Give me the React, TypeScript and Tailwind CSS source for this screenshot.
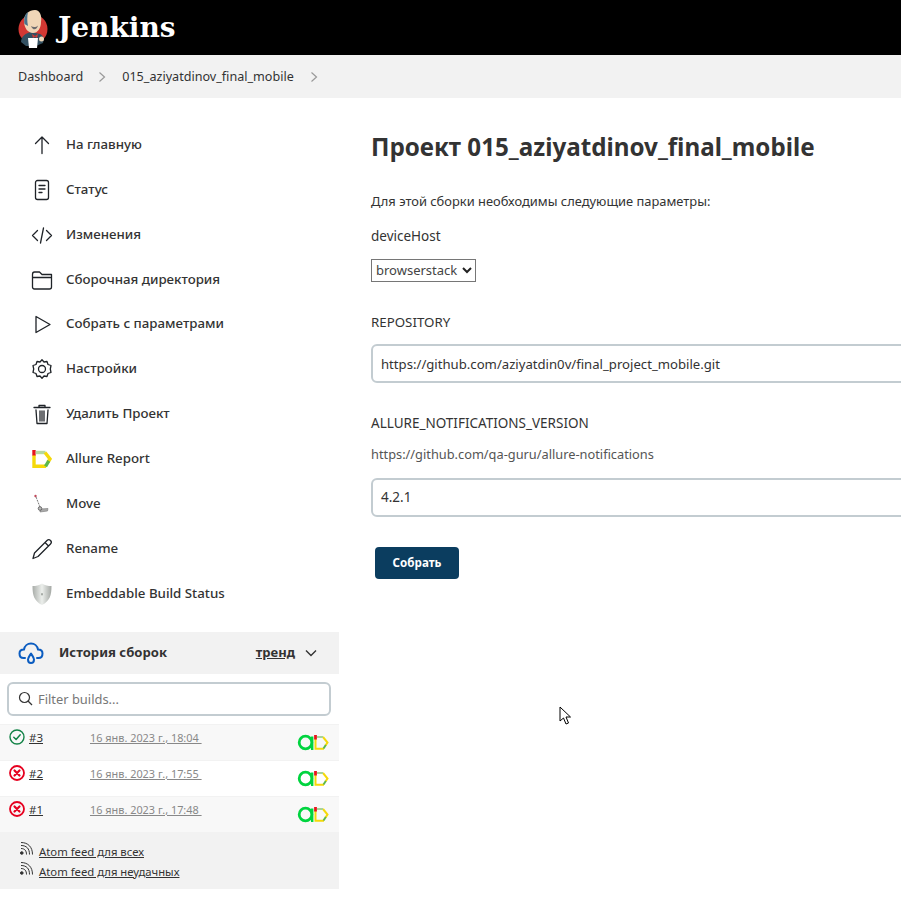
import React from "react";

const F = "font-['Noto_Sans','Open_Sans',sans-serif]";

function Ico({ children, s = 24 }: { children: React.ReactNode; s?: number }) {
  return (
    <svg width={s} height={s} viewBox="0 0 24 24" fill="none" stroke="#1f2328" strokeWidth="1.300" strokeLinecap="round" strokeLinejoin="round">
      {children}
    </svg>
  );
}

const AllureD = () => (
  <svg className="-mt-[1px]" width="20" height="20" viewBox="0 0 20 20" fill="none" strokeWidth="3.400">
    <path d="M2 6V17.300H14" stroke="#f5d90a" />
    <path d="M2 1V6.500" stroke="#e8141c" />
    <path d="M3.700 3.500H13.500" stroke="#b5d8a0" />
    <path d="M13 3.500L18 10L16 13" stroke="#f5d90a" />
    <path d="M16.800 11.800L13.500 17.300" stroke="#5cb84a" />
  </svg>
);

const Move = () => (
  <svg width="20" height="24" viewBox="0 0 20 24" fill="none">
    <circle cx="3.500" cy="4" r="1.200" fill="#c0485a" />
    <path d="M4 5L8 15" stroke="#777" strokeWidth="1" strokeDasharray="2 1" />
    <path d="M8 17L16 16.500L15.500 19L8 20Z" fill="#aaa" stroke="#777" strokeWidth="0.600" />
    <circle cx="8" cy="16.500" r="1.800" fill="#bbb" stroke="#555" strokeWidth="0.800" />
  </svg>
);

const Shield = () => (
  <svg width="22" height="24" viewBox="0 0 22 24">
    <defs>
      <linearGradient id="sg" x1="0" x2="1" y1="0" y2="0">
        <stop offset="0" stopColor="#a9ada9" />
        <stop offset="0.500" stopColor="#ecefec" />
        <stop offset="1" stopColor="#a4a8a4" />
      </linearGradient>
    </defs>
    <path d="M11 1.500C8 3.500 5 4 1.500 4C1.500 13 3 19 11 23C19 19 20.500 13 20.500 4C17 4 14 3.500 11 1.500Z" fill="url(#sg)" />
    <rect x="10" y="11" width="2" height="2.500" rx="1" fill="#a5a9a5" />
  </svg>
);

const items: [React.ReactNode, string][] = [
  [<Ico key="a"><path d="M12 20.500V4M5.500 10.500L12 4L18.500 10.500" /></Ico>, "На главную"],
  [<Ico key="b"><rect x="5.500" y="2.500" width="13" height="19" rx="2" /><path d="M9 7.500H15M9 11H15M9 14.500H12" /></Ico>, "Статус"],
  [<Ico key="c"><path d="M7.500 7.500L2.500 12.500L7.500 17.500M16.500 7.500L21.500 12.500L16.500 17.500M13.500 5L10.500 20" /></Ico>, "Изменения"],
  [<Ico key="d"><path d="M2.500 6.500C2.500 5 3 4 4.500 4H9.500L12 6.500H21.500V19C21.500 20 21 21 19.500 21H4.500C3 21 2.500 20 2.500 19ZM2.500 9.500H21.500" /></Ico>, "Сборочная директория"],
  [<Ico key="e"><path d="M6 4.500V20.500L20 12.500Z" /></Ico>, "Собрать с параметрами"],
  [<Ico key="f"><path d="M12 2.800L14 5L17 4.500L18 7.500L21 8.500L20.300 12L21 15.500L18 16.500L17 19.500L14 19L12 21.200L10 19L7 19.500L6 16.500L3 15.500L3.700 12L3 8.500L6 7.500L7 4.500L10 5Z" /><circle cx="12" cy="12" r="3.500" /></Ico>, "Настройки"],
  [<Ico key="g"><path d="M4 5.500H20M9 5.500V3.500H15V5.500M6 8L7 21.500H17L18 8M10 9V19M12 9V19M14 9V19" /></Ico>, "Удалить Проект"],
  [<AllureD key="h" />, "Allure Report"],
  [<Move key="i" />, "Move"],
  [<Ico key="j"><path d="M3 21.500L4.500 16L17 3.500C18 2.500 19.500 2.500 20.500 3.500C21.500 4.500 21.500 6 20.500 7L8 19.500ZM15 5.500L18.500 9" /></Ico>, "Rename"],
  [<Shield key="k" />, "Embeddable Build Status"],
];

const Status = ({ ok }: { ok: boolean }) => (
  <svg width="16" height="16" viewBox="0 0 16 16" fill="none" strokeWidth="1.500" strokeLinecap="round" strokeLinejoin="round">
    <circle cx="8" cy="8" r="7" stroke={ok ? "#138347" : "#e6001f"} strokeWidth={ok ? 1.4 : 1.8} />
    {ok ? <path d="M4.800 8.300L7.100 10.500L11.200 5.800" stroke="#138347" /> : <path d="M5.500 5.500L10.500 10.500M10.500 5.500L5.500 10.500" stroke="#e6001f" strokeWidth="2.200" />}
  </svg>
);

const BuildBadge = () => (
  <svg width="32" height="18" viewBox="0 0 32 18" fill="none">
    <circle cx="8.500" cy="9.500" r="6.300" stroke="#00d43f" strokeWidth="2.800" />
    <path d="M15.200 3.500V17" stroke="#00d43f" strokeWidth="2.400" />
    <path d="M18.500 6V15.800H27" stroke="#f5d90a" strokeWidth="2" />
    <path d="M18.500 2V6.500" stroke="#e8141c" strokeWidth="2.800" />
    <path d="M26 4L30.500 9.500L28.500 12.500" stroke="#f5d90a" strokeWidth="2" />
    <path d="M20 4H26" stroke="#a8d498" strokeWidth="2" />
    <path d="M28.800 12L26.500 15.500" stroke="#5cb84a" strokeWidth="2" />
  </svg>
);

const builds = [
  { ok: true, n: "#3", d: "16 янв. 2023 г., 18:04 ", bg: "bg-[#f8f8f8]" },
  { ok: false, n: "#2", d: "16 янв. 2023 г., 17:55 ", bg: "bg-white" },
  { ok: false, n: "#1", d: "16 янв. 2023 г., 17:48 ", bg: "bg-[#f8f8f8]" },
];

const Rss = () => (
  <svg className="-mt-[6px]" width="13" height="13" viewBox="0 0 13 13" fill="none" stroke="#333" strokeWidth="1">
    <circle cx="1.800" cy="11" r="1.300" fill="#333" />
    <path d="M1 6.500C4.500 6.500 6.500 8.500 6.500 12.500M1 3.500C6.500 3.500 9.500 6.500 9.500 12.500M1 0.500C8 0.500 12.500 5 12.500 12.500" />
  </svg>
);

function Param({ children, cls = "text-[13.500px]" }: { children: React.ReactNode; cls?: string }) {
  return <div className={`${cls} leading-[20px] text-[#333]`}>{children}</div>;
}

export default function App() {
  return (
    <div className={`${F} relative h-[905px] w-[901px] overflow-hidden bg-white text-[#333]`}>
      <header className="flex h-[55px] items-center bg-black pl-[18px]">
        <svg width="30" height="40" viewBox="0 0 30 40">
          <circle cx="15" cy="21" r="14.500" fill="#d33833" />
          <path d="M3 34C3 28 8 25 13 24L22 26C26 28 26 31 25 35L18 38H8Z" fill="#335061" />
          <path d="M6 13C6 6 11 2 17 2C22 2 24 8 23 14C23 20 20 25 15 25C10 25 6 20 6 13Z" fill="#f0d6b7" />
          <path d="M6.500 16C5.500 11 7 6 10 4C9 9 9 13 10 18Z" fill="#49728b" />
          <path d="M14 26L17 28L20 26L19 30L17 28.500L15 30Z" fill="#d33833" />
          <path d="M13 18C15 19.500 18 19.500 20 17.500C19 22 15 23 13 18Z" fill="#6d6b6d" />
          <path d="M10 30H20L19 40H11Z" fill="#fff" />
          <circle cx="23.500" cy="31" r="2.500" fill="#f0d6b7" />
        </svg>
        <span className="ml-[10px] font-['DejaVu_Serif',serif] text-[28px] font-bold leading-none text-white">Jenkins</span>
      </header>

      <nav className="flex h-[43px] items-center bg-[#f2f2f2] pl-[18px] pt-[1px] text-[12.600px] text-[#333]">
        <span>Dashboard</span>
        <svg className="ml-[15px] mr-[16px]" width="8" height="12" viewBox="0 0 8 12" fill="none" stroke="#999" strokeWidth="1.200"><path d="M1.500 1.500L6.500 6L1.500 10.500" /></svg>
        <span>015_aziyatdinov_final_mobile</span>
        <svg className="ml-[16px]" width="8" height="12" viewBox="0 0 8 12" fill="none" stroke="#999" strokeWidth="1.200"><path d="M1.500 1.500L6.500 6L1.500 10.500" /></svg>
      </nav>

      <div className="flex">
        <aside className="w-[339px] shrink-0 pt-[24.400px]">
          <ul className="flex flex-col pl-[30px]">
            {items.map(([icon, label]) => (
              <li key={label} className="flex h-[44.900px] items-center text-[13.300px] font-medium text-[#333]">
                <span className="flex w-[24px] justify-center">{icon}</span>
                <span className="ml-[12px]">{label}</span>
              </li>
            ))}
          </ul>

          <div className="mt-[15.600px] flex h-[42px] items-center bg-[#f2f2f2] pl-[18px] pr-[22px]">
            <svg width="26" height="26" viewBox="0 0 26 26" fill="none" stroke="#0b5cc0" strokeWidth="2" strokeLinecap="round" strokeLinejoin="round">
              <path d="M7 18H5.500C3 18 1.500 16 1.500 13.500C1.500 11 3.500 9.500 6 9.500C6.500 6 9.500 3.500 13 3.500C16.500 3.500 19.500 6 20 9.500C22.500 9.500 24.500 11 24.500 13.500C24.500 16 23 18 20.500 18H19" />
              <path d="M13 13.500C11.500 16 10 17.500 10 19.500C10 21.500 11.300 23 13 23C14.700 23 16 21.500 16 19.500C16 17.500 14.500 16 13 13.500Z" />
            </svg>
            <span className="ml-[15px] text-[13.100px] font-bold text-[#333]">История сборок</span>
            <span className="ml-auto text-[13px] font-bold text-[#333] underline">тренд</span>
            <svg className="ml-[10px]" width="12" height="8" viewBox="0 0 12 8" fill="none" stroke="#333" strokeWidth="1.400"><path d="M1 1.500L6 6.500L11 1.500" /></svg>
          </div>

          <div className="pb-[8px] pl-[7px] pr-[8px] pt-[8px]">
            <div className="flex h-[34px] items-center rounded-[6px] border-2 border-[#c3ccd1] pl-[9px]">
              <svg width="15" height="15" viewBox="0 0 15 15" fill="none" stroke="#333" strokeWidth="1.200"><circle cx="6.500" cy="6.500" r="5" /><path d="M10 10L14 14" /></svg>
              <span className="ml-[5px] pt-[1px] text-[12.900px] text-[#777]">Filter builds...</span>
            </div>
          </div>

          {builds.map((b) => (
            <div key={b.n} className={`${b.bg} relative flex h-9 items-start border-t border-[#f2f2f2] pl-[9px] pr-[10px] pt-[4px]`}>
              <Status ok={b.ok} />
              <span className="ml-[4px] text-[11.500px] leading-[18px] text-[#333] underline">{b.n}</span>
              <span className="absolute left-[90px] top-[4px] whitespace-pre text-[10.900px] leading-[18px] text-[#888] underline">{b.d}</span>
              <span className="ml-auto mt-[4px]"><BuildBadge /></span>
            </div>
          ))}

          <div className="flex h-[57px] flex-col gap-[2px] bg-[#f2f2f2] pl-[20px] pt-[11px]">
            {["Atom feed для всех", "Atom feed для неудачных"].map((t) => (
              <div key={t} className="flex items-center">
                <Rss />
                <span className="ml-[6px] text-[11.300px] leading-[18px] text-[#333] underline">{t}</span>
              </div>
            ))}
          </div>
        </aside>

        <main className="flex-1 pl-[32px] pt-[29px]">
          <h1 className="text-[24.200px] font-bold leading-[40px] text-[#333]">Проект 015_aziyatdinov_final_mobile</h1>
          <div className="mt-[24px]"><Param cls="text-[12.900px]">Для этой сборки необходимы следующие параметры:</Param></div>
          <div className="mt-[15px]"><Param>deviceHost</Param></div>
          <div className="mt-[13px] flex h-[23px] w-[105px] items-center border border-[#767676] pl-[4px] text-[13px] text-[#444]">
            browserstack
            <svg className="ml-[5px]" width="10" height="7" viewBox="0 0 10 7" fill="none" stroke="#222" strokeWidth="2"><path d="M1 1L5 5L9 1" /></svg>
          </div>
          <div className="mt-[30px]"><Param cls="text-[13.300px]">REPOSITORY</Param></div>
          <div className="mt-[12px] flex h-[39px] w-[560px] items-center rounded-[6px] border-2 border-[#c3ccd1] pl-[8px] pt-[2px] text-[13.150px] text-[#333]">https://github.com/aziyatdin0v/final_project_mobile.git</div>
          <div className="mt-[30px]"><Param>ALLURE_NOTIFICATIONS_VERSION</Param></div>
          <div className="mt-[11px] text-[12.800px] leading-[20px] text-[#555]">https://github.com/qa-guru/allure-notifications</div>
          <div className="mt-[14px] flex h-[39px] w-[560px] items-center rounded-[6px] border-2 border-[#c3ccd1] pl-[8px] text-[13.500px] text-[#333]">4.2.1</div>
          <button className="ml-[4px] mt-[30px] flex h-[32px] w-[84px] items-center justify-center rounded-[4px] bg-[#0b3d5f] text-[11.600px] font-bold text-white">Собрать</button>
        </main>
      </div>

      <svg className="absolute left-[559px] top-[706px]" width="13" height="20" viewBox="0 0 13 20">
        <path d="M1 1V15L4.500 12L7 18L9.500 17L7 11H11.500Z" fill="#fff" stroke="#000" strokeWidth="1" />
      </svg>
    </div>
  );
}
